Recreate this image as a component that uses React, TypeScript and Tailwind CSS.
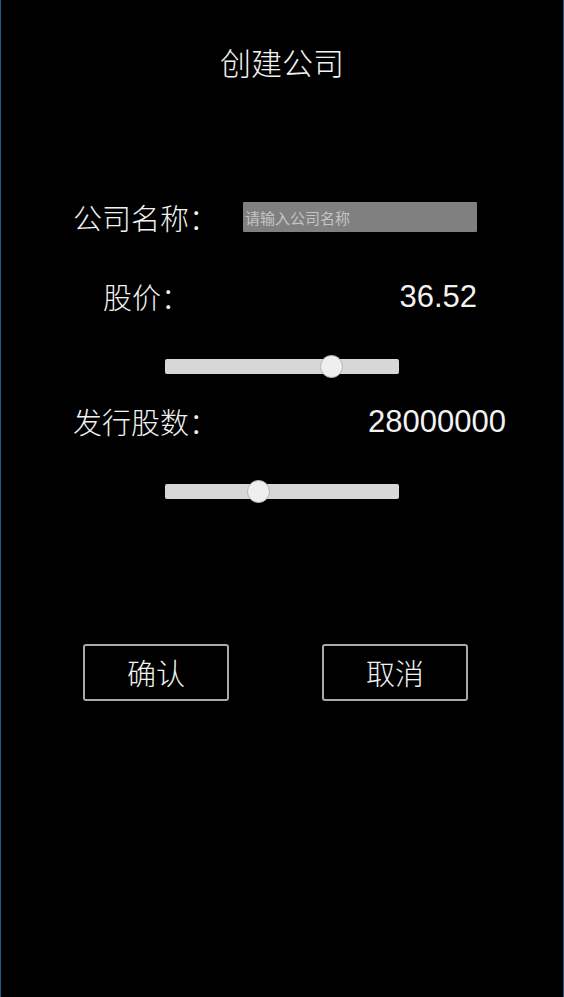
import { type JSX } from "react";

const cjk = "font-['Noto_Sans_CJK_SC','Noto_Sans',sans-serif]";
const num = "font-['Liberation_Sans',Arial,sans-serif]";

const Slider = ({ thumbLeft }: { thumbLeft: string }): JSX.Element => (
  <div className="flex h-[24px] items-center pl-[164px]">
    <div className="relative h-[15px] w-[234px] rounded-[2px] bg-[#d7d7d7]">
      <div
        className={`absolute top-[-4px] h-[23px] w-[23px] rounded-full border border-[#b4b4b4] bg-[#efefef] ${thumbLeft}`}
      ></div>
    </div>
  </div>
);

export default function App(): JSX.Element {
  return (
    <div className="flex h-[997px] w-full flex-col border-x border-[#275a86] bg-black text-[#f2f2f2]">
      <h1 className={`${cjk} mt-[41px] flex h-[40px] items-center justify-center text-[31px] font-light leading-none`}>
        创建公司
      </h1>

      <div className="mt-[121px] flex h-[30px] items-center pl-[72px]">
        <span className={`${cjk} w-[170px] text-[29px] font-light leading-none`}>
          公司名称：
        </span>
        <input
          type="text"
          placeholder="请输入公司名称"
          className={`${cjk} h-[30px] w-[234px] rounded-[1px] bg-[#808080] px-[2px] text-[15px] text-white outline-none placeholder:text-[#c4c4c4]`}
        />
      </div>

      <div className="mt-[49px] flex h-[30px] items-center pl-[102px]">
        <span className={`${cjk} text-[29px] font-light leading-none`}>股价：</span>
        <span className={`${num} ml-auto mr-[86px] text-[31px] leading-none`}>36.52</span>
      </div>

      <div className="mt-[43px]">
        <Slider thumbLeft="left-[155px]" />
      </div>

      <div className="mt-[28px] flex h-[30px] items-center pl-[72px]">
        <span className={`${cjk} text-[29px] font-light leading-none`}>发行股数：</span>
        <span className={`${num} ml-auto mr-[57px] text-[31px] leading-none`}>28000000</span>
      </div>

      <div className="mt-[43px]">
        <Slider thumbLeft="left-[82px]" />
      </div>

      <div className="mt-[141px] flex pl-[82px]">
        <button
          type="button"
          className={`${cjk} flex h-[57px] w-[146px] items-center justify-center rounded-[3px] border-2 border-[#a9a9a9] text-[29px] font-light leading-none`}
        >
          确认
        </button>
        <button
          type="button"
          className={`${cjk} ml-[93px] flex h-[57px] w-[146px] items-center justify-center rounded-[3px] border-2 border-[#a9a9a9] text-[29px] font-light leading-none`}
        >
          取消
        </button>
      </div>
    </div>
  );
}
